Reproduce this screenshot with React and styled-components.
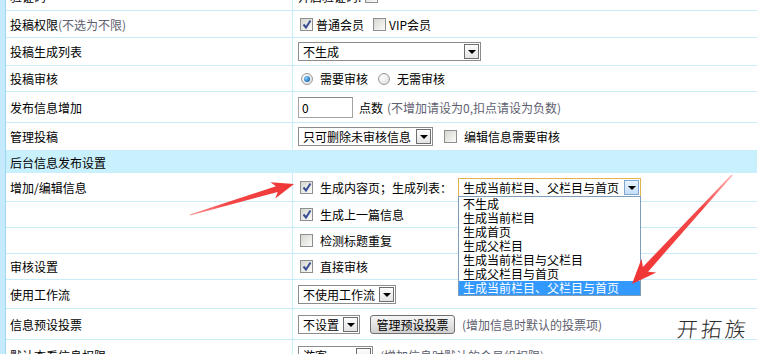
import React from "react";
import styled, { createGlobalStyle } from "styled-components";

const GlobalStyle = createGlobalStyle`
  html, body { margin: 0; padding: 0; background: #fff; }
  body {
    font-family: "Noto Sans CJK SC", "Liberation Sans", sans-serif;
    font-size: 12px;
    color: #000;
    overflow: hidden;
  }
`;

const Page = styled.div`
  position: relative;
  width: 757px;
  height: 354px;
  overflow: hidden;
  display: flex;
`;

const SideBar = styled.div`
  flex: none;
  width: 5px;
  background: #c4eafb;
  border-right: 1px solid #9fd7f1;
`;

const Table = styled.div`
  flex: 1;
  margin-top: -17px;
`;

const Row = styled.div`
  display: flex;
  height: ${({ h }) => h}px;
  box-sizing: border-box;
  border-bottom: 1px solid #c8ecfa;
`;

const Label = styled.div`
  flex: none;
  width: 287px;
  box-sizing: border-box;
  padding-left: 4px;
  border-right: 1px solid #c8ecfa;
  display: flex;
  align-items: center;
  white-space: nowrap;
`;

const Value = styled.div`
  flex: 1;
  padding-left: 5px;
  display: flex;
  align-items: center;
  white-space: nowrap;
`;

const HeaderRow = styled.div`
  height: 22px;
  background: #c9f0fd;
  padding-left: 4px;
  display: flex;
  align-items: center;
`;

const Note = styled.span`
  color: #5e6070;
  margin-left: ${({ ml }) => ml || 0}px;
`;

const Text = styled.span`
  margin-left: ${({ ml }) => ml || 0}px;
  letter-spacing: ${({ ls }) => ls || 0}px;
`;

const Box = styled.span`
  flex: none;
  display: inline-block;
  position: relative;
  width: 13px;
  height: 13px;
  box-sizing: border-box;
  border: 1px solid #8d8e8e;
  background: linear-gradient(135deg, #d6d6d0, #fbfbfa);
  margin-left: ${({ ml }) => (ml === undefined ? 2 : ml)}px;
  margin-right: ${({ mr }) => (mr === undefined ? 7 : mr)}px;

  svg { position: absolute; left: 1px; top: 0px; }
`;

const Checkbox = ({ checked, ml, mr }) => (
  <Box ml={ml} mr={mr}>
    {checked && (
      <svg width="10" height="11" viewBox="0 0 10 11">
        <path d="M1.5 5.5 L4 8.5 L8.5 1.5" fill="none" stroke="#3a4f93" strokeWidth="2" />
      </svg>
    )}
  </Box>
);

const RadioRing = styled.span`
  flex: none;
  width: 12px;
  height: 12px;
  box-sizing: border-box;
  border-radius: 50%;
  border: 1px solid #9a9a9a;
  background: radial-gradient(circle at 35% 35%, #ffffff, #d8d8d8);
  margin-left: ${({ ml }) => ml || 0}px;
  margin-right: 7px;
  display: flex;
  align-items: center;
  justify-content: center;
`;

const RadioDot = styled.span`
  width: 6px;
  height: 6px;
  border-radius: 50%;
  background: radial-gradient(circle at 35% 35%, #8fd2ff, #1e6fb8 70%, #0d3f78);
`;

const Radio = ({ checked, ml }) => (
  <RadioRing ml={ml}>{checked && <RadioDot />}</RadioRing>
);

const SelectWrap = styled.span`
  position: relative;
  flex: none;
  display: inline-flex;
  align-items: center;
  width: ${({ w }) => w}px;
  height: 19px;
  box-sizing: border-box;
  border: 1px solid ${({ focused }) => (focused ? "#e2b44c" : "#8c8c8c")};
  background: #fff;
  margin-left: ${({ ml }) => ml || 0}px;
`;

const SelectText = styled.span`
  flex: 1;
  padding-left: 4px;
  line-height: 17px;
  overflow: hidden;
`;

const SelectBtn = styled.span`
  flex: none;
  width: 15px;
  height: 15px;
  margin: 1px;
  box-sizing: border-box;
  border: 1px solid ${({ focused }) => (focused ? "#7ea6d4" : "#6e6e6e")};
  background: ${({ focused }) =>
    focused ? "linear-gradient(#e8f3fd, #c4def7)" : "linear-gradient(#fdfdfd, #e4e4e4)"};
  display: flex;
  align-items: center;
  justify-content: center;

  &::after {
    content: "";
    border-left: 4px solid transparent;
    border-right: 4px solid transparent;
    border-top: 4px solid #000;
    margin-top: 1px;
  }
`;

const DropList = styled.div`
  position: absolute;
  top: 100%;
  left: -1px;
  right: -1px;
  background: #fff;
  border: 1px solid #7f9db9;
  z-index: 5;
`;

const DropItem = styled.div`
  height: 14px;
  line-height: 14px;
  padding-left: 4px;
  overflow: hidden;
  background: ${({ active }) => (active ? "#3399ff" : "transparent")};
  color: ${({ active }) => (active ? "#fff" : "#000")};
`;

const Select = ({ w, value, focused, ml, options, active }) => (
  <SelectWrap w={w} focused={focused} ml={ml}>
    <SelectText>{value}</SelectText>
    <SelectBtn focused={focused} />
    {options && (
      <DropList>
        {options.map((o, i) => (
          <DropItem key={i} active={i === active}>
            {o}
          </DropItem>
        ))}
      </DropList>
    )}
  </SelectWrap>
);

const Input = styled.span`
  flex: none;
  display: inline-flex;
  align-items: center;
  width: 55px;
  height: 21px;
  box-sizing: border-box;
  border: 1px solid #a4a4a4;
  border-top-color: #8a8a8a;
  padding-left: 3px;
`;

const Button = styled.span`
  flex: none;
  display: inline-flex;
  align-items: center;
  justify-content: center;
  width: 85px;
  height: 19px;
  box-sizing: border-box;
  border: 1px solid #6f6f6f;
  border-radius: 3px;
  background: linear-gradient(#f6f6f6, #e2e2e2 55%, #d0d0d0);
  margin-left: 10px;
`;

const Overlay = styled.svg`
  position: absolute;
  left: 0;
  top: 0;
  pointer-events: none;
  z-index: 10;
`;

const Watermark = styled.div`
  position: absolute;
  right: 8px;
  bottom: 11px;
  font-family: "Noto Sans CJK SC", sans-serif;
  font-weight: 300;
  font-size: 21px;
  letter-spacing: 3px;
  color: #2a2a2a;
  transform: skewX(-6deg);
  z-index: 11;
`;

const listOptions = [
  "不生成",
  "生成当前栏目",
  "生成首页",
  "生成父栏目",
  "生成当前栏目与父栏目",
  "生成父栏目与首页",
  "生成当前栏目、父栏目与首页",
];

export default function App() {
  return (
    <>
      <GlobalStyle />
      <Page>
        <SideBar />
        <Table>
          <Row h={28}>
            <Label>验证码</Label>
            <Value>
              <Text>开启验证码:</Text>
              <Checkbox ml={4} />
            </Value>
          </Row>
          <Row h={27}>
            <Label>
              投稿权限<Note>(不选为不限)</Note>
            </Label>
            <Value>
              <Checkbox checked mr={3} />
              <Text>普通会员</Text>
              <Checkbox ml={9} mr={3} />
              <Text>VIP会员</Text>
            </Value>
          </Row>
          <Row h={28}>
            <Label>投稿生成列表</Label>
            <Value>
              <Select w={183} value="不生成" />
            </Value>
          </Row>
          <Row h={26}>
            <Label>投稿审核</Label>
            <Value>
              <Radio checked ml={3} />
              <Text>需要审核</Text>
              <Radio ml={10} />
              <Text>无需审核</Text>
            </Value>
          </Row>
          <Row h={31}>
            <Label>发布信息增加</Label>
            <Value>
              <Input>0</Input>
              <Text ml={6}>点数</Text>
              <Note ml={4}>(不增加请设为0,扣点请设为负数)</Note>
            </Value>
          </Row>
          <Row h={28}>
            <Label>管理投稿</Label>
            <Value>
              <Select w={135} value="只可删除未审核信息" />
              <Checkbox ml={11} />
              <Text>编辑信息需要审核</Text>
            </Value>
          </Row>
          <HeaderRow>后台信息发布设置</HeaderRow>
          <Row h={29}>
            <Label>增加/编辑信息</Label>
            <Value>
              <Checkbox checked />
              <Text>生成内容页；生成列表：</Text>
              <Select
                w={183}
                ml={6}
                focused
                value="生成当前栏目、父栏目与首页"
                options={listOptions}
                active={6}
              />
            </Value>
          </Row>
          <Row h={26}>
            <Label />
            <Value>
              <Checkbox checked />
              <Text>生成上一篇信息</Text>
            </Value>
          </Row>
          <Row h={26}>
            <Label />
            <Value>
              <Checkbox />
              <Text>检测标题重复</Text>
            </Value>
          </Row>
          <Row h={26}>
            <Label>审核设置</Label>
            <Value>
              <Checkbox checked />
              <Text>直接审核</Text>
            </Value>
          </Row>
          <Row h={29}>
            <Label>使用工作流</Label>
            <Value>
              <Select w={98} value="不使用工作流" />
            </Value>
          </Row>
          <Row h={31}>
            <Label>信息预设投票</Label>
            <Value>
              <Select w={62} value="不设置" />
              <Button>管理预设投票</Button>
              <Note ml={7}>(增加信息时默认的投票项)</Note>
            </Value>
          </Row>
          <Row h={31}>
            <Label>默认查看信息权限</Label>
            <Value>
              <Select w={75} value="游客" />
              <Note ml={7}>(增加信息时默认的会员组权限)</Note>
            </Value>
          </Row>
        </Table>

        <Overlay width="757" height="354" viewBox="0 0 757 354">
          <defs>
            <linearGradient id="ga" gradientUnits="userSpaceOnUse" x1="190" y1="215" x2="294" y2="184">
              <stop offset="0" stopColor="#ff9a9a" />
              <stop offset="0.35" stopColor="#f44848" />
              <stop offset="1" stopColor="#ef3434" />
            </linearGradient>
            <linearGradient id="gb" gradientUnits="userSpaceOnUse" x1="732" y1="175" x2="632" y2="284">
              <stop offset="0" stopColor="#ffb0b0" />
              <stop offset="0.3" stopColor="#f44848" />
              <stop offset="1" stopColor="#ef3434" />
            </linearGradient>
          </defs>
          <polygon
            points="190,215.5 277.7,192 275.3,198.4 294,184 270.5,182.2 275.9,186.2 189.8,214.5"
            fill="url(#ga)"
          />
          <polygon
            points="732.5,175.5 648.1,271.7 656.3,272.4 632,284 641.5,258.8 642.9,266.9 731.5,174.5"
            fill="url(#gb)"
          />
        </Overlay>
        <Watermark>开拓族</Watermark>
      </Page>
    </>
  );
}
